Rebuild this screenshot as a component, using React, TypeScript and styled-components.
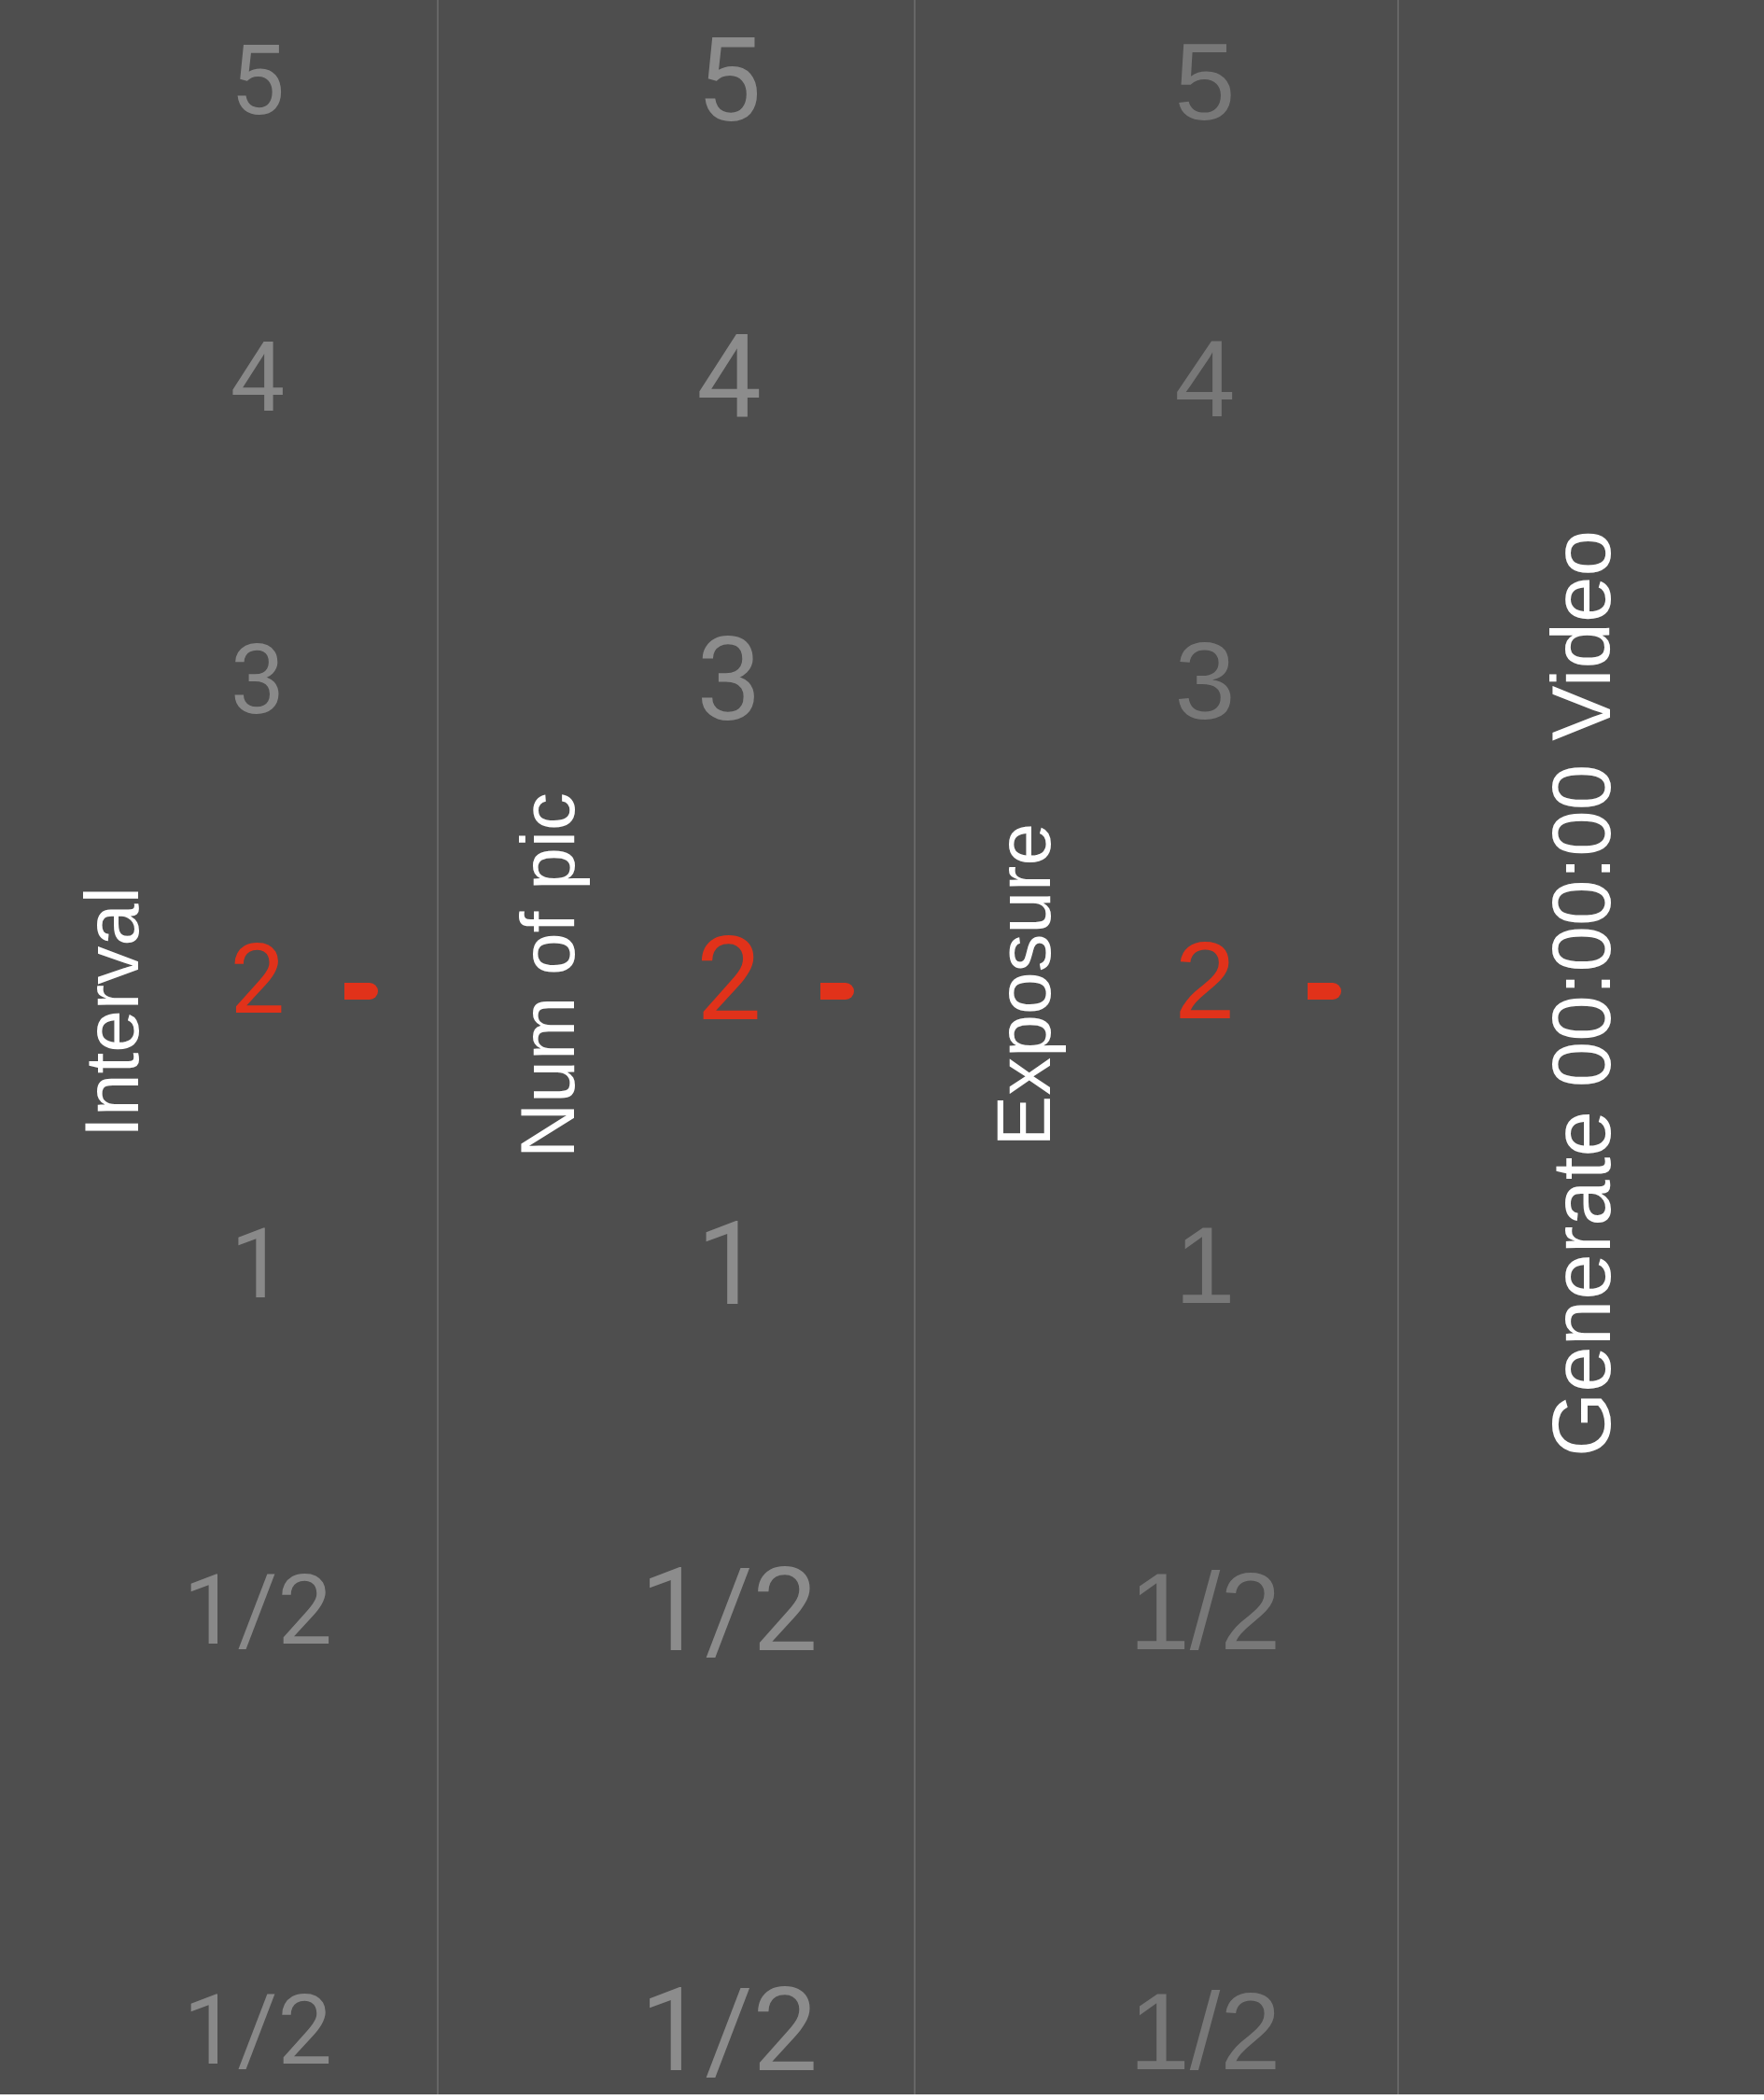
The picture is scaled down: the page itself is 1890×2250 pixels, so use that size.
import React from 'react';
import styled, { createGlobalStyle } from 'styled-components';

const GlobalStyle = createGlobalStyle`
  html, body {
    margin: 0;
    padding: 0;
    background: #ffffff;
  }
  #root {
    width: 1890px;
  }
`;

const RED = '#e1321a';

const Panel = styled.div`
  display: flex;
  width: 1890px;
  height: 2244px;
  background: #4e4e4e;
`;

const Column = styled.section<{ $width?: number; $pad: number; $last?: boolean }>`
  display: flex;
  align-items: flex-start;
  box-sizing: border-box;
  flex: ${(p) => (p.$width ? `0 0 ${p.$width}px` : '1 1 auto')};
  height: 2250px;
  padding-left: ${(p) => p.$pad}px;
  border-right: ${(p) => (p.$last ? 'none' : '2px solid #666666')};
`;

const Label = styled.div<{ $top: number; $size: number; $gap: number }>`
  flex: none;
  margin-top: ${(p) => p.$top}px;
  margin-right: ${(p) => p.$gap}px;
  writing-mode: vertical-rl;
  transform: rotate(180deg);
  font-family: 'Liberation Sans', Arial, Helvetica, sans-serif;
  font-size: ${(p) => p.$size}px;
  line-height: 1;
  color: #ffffff;
  white-space: nowrap;
`;

const Wheel = styled.div`
  display: flex;
  flex-direction: column;
`;

const Row = styled.div<{ $offset: number }>`
  display: flex;
  align-items: center;
  height: 140px;
  margin-top: ${(p) => p.$offset}px;
`;

const Value = styled.div<{ $font: string; $size: number; $weight: number; $color: string; $active?: boolean }>`
  display: flex;
  justify-content: center;
  width: 150px;
  font-family: ${(p) => p.$font};
  font-size: ${(p) => p.$size}px;
  font-weight: ${(p) => p.$weight};
  line-height: 1;
  color: ${(p) => (p.$active ? RED : p.$color)};
  white-space: nowrap;
`;

const Marker = styled.span<{ $gap: number }>`
  flex: none;
  width: 36px;
  height: 18px;
  margin-left: ${(p) => p.$gap}px;
  margin-top: 24px;
  border-radius: 0 9px 9px 0;
  background: ${RED};
`;

const Action = styled.div`
  display: flex;
  justify-content: center;
  width: 100%;
  padding-top: 568px;
`;

const ActionLabel = styled.button`
  writing-mode: vertical-rl;
  transform: rotate(180deg);
  padding: 0;
  border: 0;
  background: none;
  font-family: 'Liberation Sans', Arial, Helvetica, sans-serif;
  font-size: 89px;
  line-height: 1;
  color: #ffffff;
  white-space: nowrap;
  cursor: pointer;
`;

const rows = [
  { value: '5', offset: 17 },
  { value: '4', offset: 178 },
  { value: '3', offset: 184 },
  { value: '2', offset: 181 },
  { value: '1', offset: 165 },
  { value: '1/2', offset: 231 },
  { value: '1/2', offset: 310 },
];

const GEOMETRIC = "Roboto, 'Noto Sans', sans-serif";
const HELVETICA = "'Liberation Sans', Arial, Helvetica, sans-serif";

const pickers = [
  {
    label: 'Interval',
    width: 470,
    pad: 79,
    labelTop: 950,
    labelGap: 40,
    markerGap: 18,
    font: GEOMETRIC,
    size: 104,
    weight: 400,
    color: '#898989',
  },
  {
    label: 'Num of pic',
    width: 511,
    pad: 76,
    labelTop: 849,
    labelGap: 78,
    markerGap: 23,
    font: GEOMETRIC,
    size: 124,
    weight: 400,
    color: '#8c8c8c',
  },
  {
    label: 'Exposure',
    width: 518,
    pad: 75,
    labelTop: 882,
    labelGap: 78,
    markerGap: 35,
    font: HELVETICA,
    size: 117,
    weight: 400,
    color: '#787878',
  },
];

const selected = '2';

const App = () => (
  <>
    <GlobalStyle />
    <Panel>
      {pickers.map((p) => (
        <Column key={p.label} $width={p.width} $pad={p.pad}>
          <Label $top={p.labelTop} $size={82} $gap={p.labelGap}>
            {p.label}
          </Label>
          <Wheel>
            {rows.map((r, i) => (
              <Row key={i} $offset={r.offset}>
                <Value
                  $font={p.font}
                  $size={p.size}
                  $weight={p.weight}
                  $color={p.color}
                  $active={r.value === selected}
                >
                  {r.value}
                </Value>
                {r.value === selected && <Marker $gap={p.markerGap} />}
              </Row>
            ))}
          </Wheel>
        </Column>
      ))}
      <Column $pad={0} $last>
        <Action>
          <ActionLabel>Generate 00:00:00 Video</ActionLabel>
        </Action>
      </Column>
    </Panel>
  </>
);

export default App;
